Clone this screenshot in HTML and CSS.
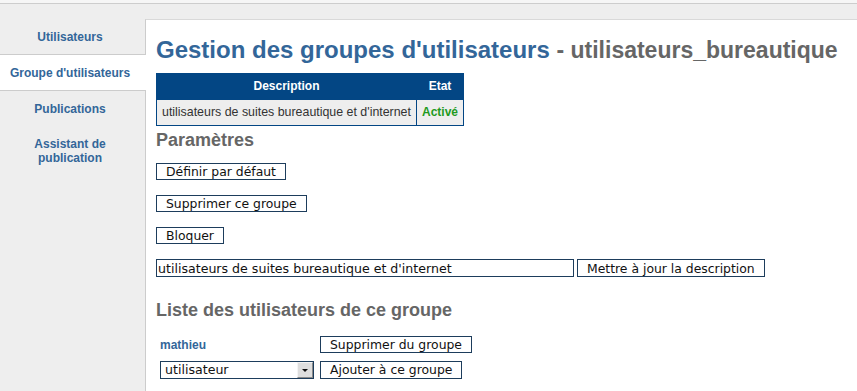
FILE: index.html
```html
<!DOCTYPE html>
<html lang="fr">
<head>
<meta charset="utf-8">
<title>Gestion des groupes d'utilisateurs</title>
<link rel="stylesheet" href="styles.css">
</head>
<body>
<div class="topbar"></div>
<div class="layout">
  <nav class="sidebar">
    <a class="nav-item" href="#">Utilisateurs</a>
    <a class="nav-item active" href="#">Groupe d'utilisateurs</a>
    <a class="nav-item" href="#">Publications</a>
    <a class="nav-item" href="#">Assistant de<br>publication</a>
  </nav>
  <main class="panel">
    <h1 class="page-title">Gestion des groupes d'utilisateurs <span class="page-sub">- utilisateurs_bureautique</span></h1>
    <table class="group-table">
      <thead>
        <tr><th>Description</th><th>Etat</th></tr>
      </thead>
      <tbody>
        <tr><td>utilisateurs de suites bureautique et d'internet</td><td class="state-on">Activé</td></tr>
      </tbody>
    </table>

    <h2 class="section-title params-title">Paramètres</h2>
    <div class="action-row"><button class="btn" type="button">Définir par défaut</button></div>
    <div class="action-row"><button class="btn" type="button">Supprimer ce groupe</button></div>
    <div class="action-row"><button class="btn" type="button">Bloquer</button></div>
    <div class="action-row desc-row">
      <input class="desc-input" type="text" value="utilisateurs de suites bureautique et d'internet">
      <button class="btn btn-tall" type="button">Mettre à jour la description</button>
    </div>

    <h2 class="section-title list-title">Liste des utilisateurs de ce groupe</h2>
    <table class="users-table">
      <tr>
        <td><span class="user-name">mathieu</span></td>
        <td><button class="btn" type="button">Supprimer du groupe</button></td>
      </tr>
      <tr>
        <td>
          <span class="select-wrap">
            <select class="user-select"><option>utilisateur</option></select>
            <span class="select-btn" aria-hidden="true"></span>
          </span>
        </td>
        <td><button class="btn btn-tall" type="button">Ajouter à ce groupe</button></td>
      </tr>
    </table>
  </main>
</div>
</body>
</html>
```

FILE: styles.css
```css
html, body {
  margin: 0;
  padding: 0;
}

body {
  background: #eeeeee;
  font-family: "Liberation Sans", Arial, sans-serif;
  color: #333;
}

.topbar {
  height: 3px;
  background: #f6f6f6;
  border-bottom: 1px solid #cdcdcd;
}

.layout {
  display: flex;
  padding-top: 15px;
  min-height: calc(100vh - 19px);
}

.sidebar {
  width: 145px;
  flex: none;
  display: flex;
  flex-direction: column;
}

.nav-item {
  display: block;
  padding: 11px 5px 10px 0;
  line-height: 14px;
  font-size: 12px;
  font-weight: bold;
  color: #336699;
  text-align: center;
  text-decoration: none;
}

.nav-item.active {
  background: #ffffff;
  border-top: 1px solid #cccccc;
  border-bottom: 1px solid #cccccc;
  margin-right: -1px;
  padding-right: 6px;
  position: relative;
  z-index: 1;
}

.panel {
  flex: 1;
  background: #ffffff;
  border-top: 1px solid #d9d9d9;
  border-left: 1px solid #cccccc;
  padding: 0 0 0 10px;
  min-width: 0;
}

.page-title {
  margin: 16px 0 9px;
  font-size: 24px;
  line-height: 28px;
  font-weight: bold;
  color: #336699;
  white-space: nowrap;
}

.page-sub {
  color: #666666;
  font-size: 23px;
}

.group-table {
  border-collapse: collapse;
}

.group-table th {
  background: #034684;
  color: #ffffff;
  font-size: 12px;
  font-weight: bold;
  line-height: 15px;
  padding: 5px;
  border: 1px solid #034684;
  text-align: center;
}

.group-table td {
  background: #eeeeee;
  color: #333333;
  font-size: 12.4px;
  line-height: 15px;
  padding: 5px;
  border: 1px solid #034684;
  white-space: nowrap;
}

.group-table td.state-on {
  color: #1f9a1f;
  font-weight: bold;
  font-size: 12px;
}

.section-title {
  margin: 0;
  font-size: 18px;
  line-height: 21px;
  font-weight: bold;
  color: #666666;
}

.params-title {
  margin: 4px 0 12px;
}

.list-title {
  margin: 23px 0 9px;
}

.action-row {
  display: flex;
  margin-bottom: 15px;
}

.desc-row {
  gap: 3px;
  margin-bottom: 0;
}

.btn {
  height: 17px;
  box-sizing: border-box;
  padding: 0 9px;
  margin: 0;
  border: 1px solid #1d3d5c;
  border-radius: 0;
  background: #ffffff;
  color: #111111;
  font-family: "DejaVu Sans", sans-serif;
  font-size: 12.4px;
  line-height: 15px;
  white-space: nowrap;
}

.btn-tall {
  height: 18px;
}

.desc-input {
  width: 418px;
  height: 18px;
  box-sizing: border-box;
  margin: 0;
  padding: 0 1px;
  border: 1px solid #1d3d5c;
  border-radius: 0;
  font-family: "DejaVu Sans", sans-serif;
  font-size: 12.6px;
  color: #111111;
  outline: none;
}

.users-table {
  border-collapse: separate;
  border-spacing: 2px 3px;
}

.users-table td {
  padding: 2px;
  vertical-align: middle;
}

.user-name {
  font-size: 12px;
  font-weight: bold;
  color: #336699;
}

.select-wrap {
  position: relative;
  display: inline-block;
  vertical-align: middle;
}

.user-select {
  display: block;
  width: 154px;
  height: 18px;
  box-sizing: border-box;
  margin: 0;
  padding: 0 0 0 4px;
  border: 1px solid #1d3d5c;
  border-radius: 0;
  background: #ffffff;
  font-family: "DejaVu Sans", sans-serif;
  font-size: 12.6px;
  color: #111111;
  appearance: none;
  -webkit-appearance: none;
}

.select-btn {
  position: absolute;
  top: 1px;
  right: 1px;
  bottom: 1px;
  width: 16px;
  box-sizing: border-box;
  background: #dedede;
  border-right: 1px solid #8a8a8a;
  border-bottom: 1px solid #8a8a8a;
  border-left: 1px solid #f4f4f4;
  border-top: 1px solid #f4f4f4;
  pointer-events: none;
}

.select-btn::after {
  content: "";
  position: absolute;
  left: 4px;
  top: 6px;
  border-left: 3px solid transparent;
  border-right: 3px solid transparent;
  border-top: 3px solid #111111;
}
```
